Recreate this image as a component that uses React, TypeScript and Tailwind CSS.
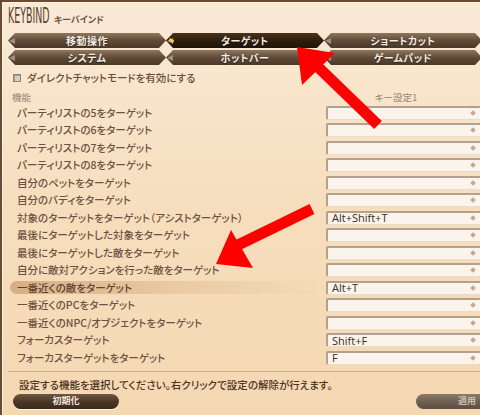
import React from "react";

const rows: { label: string; key?: string; hl?: boolean }[] = [
  { label: "パーティリストの5をターゲット" },
  { label: "パーティリストの6をターゲット" },
  { label: "パーティリストの7をターゲット" },
  { label: "パーティリストの8をターゲット" },
  { label: "自分のペットをターゲット" },
  { label: "自分のバディをターゲット" },
  { label: "対象のターゲットをターゲット（アシストターゲット）", key: "Alt+Shift+T" },
  { label: "最後にターゲットした対象をターゲット" },
  { label: "最後にターゲットした敵をターゲット" },
  { label: "自分に敵対アクションを行った敵をターゲット" },
  { label: "一番近くの敵をターゲット", key: "Alt+T", hl: true },
  { label: "一番近くのPCをターゲット" },
  { label: "一番近くのNPC/オブジェクトをターゲット" },
  { label: "フォーカスターゲット", key: "Shift+F" },
  { label: "フォーカスターゲットをターゲット", key: "F" },
];

function Tab({ label, active }: { label: string; active?: boolean }) {
  return (
    <div
      className={
        "relative w-[158px] h-[15px] flex items-center justify-center [clip-path:polygon(7px_0,calc(100%_-_7px)_0,100%_50%,calc(100%_-_7px)_100%,7px_100%,0_50%)] " +
        (active
          ? "bg-gradient-to-b from-[#4a331c] via-[#2f1e0e] to-[#1f1308]"
          : "bg-gradient-to-b from-[#8e7761] via-[#614b38] to-[#4a3828]")
      }
    >
      <span className="absolute left-[1px] top-[5px] w-[6px] h-[6px] bg-[#9c9088] [clip-path:polygon(0_50%,100%_0,100%_100%)]" />
      {active && (
        <span className="absolute left-[3px] top-[6px] w-[5px] h-[3px] bg-[#f2d23a] rounded-[1px] rotate-[25deg]" />
      )}
      <span className="relative text-[10px] font-bold text-[#f4ece4] tracking-[0.5px] [text-shadow:0_1px_1px_#00000080] font-['Noto_Sans_CJK_JP',sans-serif] [font-feature-settings:'palt']">
        {label}
      </span>
    </div>
  );
}

export default function App() {
  return (
    <div className="relative w-[480px] h-[415px] overflow-hidden bg-[#6a4a32] font-['Noto_Sans_CJK_JP',sans-serif] [font-feature-settings:'palt']">
      <div className="absolute left-0 top-0 w-[540px] h-[415px] border-t-[2px] border-l-[2px] border-[#6d4b33] bg-gradient-to-b from-[#f9ead6] via-[#f6debd] to-[#f4d8b2] shadow-[inset_1px_1px_0_#fff3e4]">
        {/* title */}
        <div className="h-[27px] pl-[6px] pt-[5px] flex items-end pb-[2px]">
          <span className="inline-block origin-left scale-x-[0.5] text-[21px] leading-[21px] text-[#5a4232] font-['Liberation_Sans_Narrow','DejaVu_Sans_Condensed',sans-serif] w-[41px] whitespace-nowrap">
            KEYBIND
          </span>
          <span className="ml-[5px] text-[9px] leading-[12px] text-[#6e5443] mb-[1px] font-bold">キーバインド</span>
        </div>
        {/* tabs */}
        <div className="pl-[6px] flex flex-col gap-[2px] mt-[4px]">
          <div className="flex">
            <Tab label="移動操作" />
            <Tab label="ターゲット" active />
            <Tab label="ショートカット" />
          </div>
          <div className="flex">
            <Tab label="システム" />
            <Tab label="ホットバー" />
            <Tab label="ゲームパッド" />
          </div>
        </div>
        {/* checkbox */}
        <div className="h-[22px] flex items-center pl-[11px] mt-[2px]">
          <span className="w-[8px] h-[8px] border border-[#8f8378] bg-[#d9cec3] shadow-[inset_1px_1px_0_#a89a8e]" />
          <span className="ml-[6px] text-[10.5px] font-medium text-[#6a4d3c]">ダイレクトチャットモードを有効にする</span>
        </div>
        {/* header */}
        <div className="h-[14px] flex items-center mt-[1px]">
          <span className="w-[324px] pl-[10px] text-[9.5px] text-[#9a8272]">機能</span>
          <span className="w-[140px] text-center text-[9.5px] text-[#9a8272]">キー設定1</span>
        </div>
        {/* list */}
        <div className="flex flex-col">
          {rows.map((r, i) => (
            <div key={i} className="h-[17.5px] flex items-center">
              <div className="w-[324px] h-full flex items-center">
                {r.hl ? (
                  <div className="ml-[8px] w-[312px] h-[13px] rounded-full bg-gradient-to-r from-[#d6ae84] via-[#e8c9a2] to-[#f5dab600] flex items-center pl-[7px]">
                    <span className="text-[10.5px] font-medium text-[#5e4232] whitespace-nowrap">{r.label}</span>
                  </div>
                ) : (
                  <span className="pl-[15px] text-[10.5px] font-medium text-[#6e5040] whitespace-nowrap">{r.label}</span>
                )}
              </div>
              <div className="relative w-[160px] h-[14px] rounded-[2px] bg-[#fbf4ec] border-t-[2px] border-l-[2px] border-[#b3a18e] border-r border-b border-r-[#e6d6c4] border-b-[#e9dccd] flex items-center pl-[4px]">
                {r.key && (
                  <span className="text-[11px] leading-[12px] text-[#3b2b20] font-['Open_Sans','Noto_Sans',sans-serif]">{r.key}</span>
                )}
                <span className="absolute left-[143px] top-[3px] w-[4px] h-[4px] rotate-45 bg-[#c9a78c]" />
              </div>
            </div>
          ))}
        </div>
        {/* separator */}
        <div className="mt-[4px] ml-[6px] h-px bg-[#c8a988]" />
        {/* footer */}
        <div className="h-[20px] flex items-center pl-[17px] mt-[3px]">
          <span className="text-[10.5px] font-medium text-[#4d3424]">設定する機能を選択してください。右クリックで設定の解除が行えます。</span>
        </div>
        <div className="flex items-center mt-[-1px]">
          <div className="ml-[11px] w-[106px] h-[15px] rounded-full bg-gradient-to-b from-[#6f5744] via-[#4d3828] to-[#3a281b] flex items-center justify-center shadow-[0_1px_0_#fff4e6]">
            <span className="text-[9px] font-bold text-[#f0e6dc]">初期化</span>
          </div>
          <div className="ml-[297px] w-[110px] h-[15px] rounded-full bg-gradient-to-b from-[#8b7b6d] via-[#6f6052] to-[#5b4e42] flex items-center pl-[42px]">
            <span className="text-[9px] font-bold text-[#c9bfb5]">適用</span>
          </div>
        </div>
      </div>
      {/* annotation arrows */}
      <svg className="absolute left-0 top-0 pointer-events-none" width="480" height="415" viewBox="0 0 480 415">
        <line x1="318" y1="67" x2="378" y2="125" stroke="#ff0000" strokeWidth="11" />
        <polygon points="297,47 335,53 302,85" fill="#ff0000" />
        <line x1="238" y1="245" x2="312" y2="209" stroke="#ff0000" strokeWidth="11" />
        <polygon points="216,264 231,230 253,268" fill="#ff0000" />
      </svg>
    </div>
  );
}
